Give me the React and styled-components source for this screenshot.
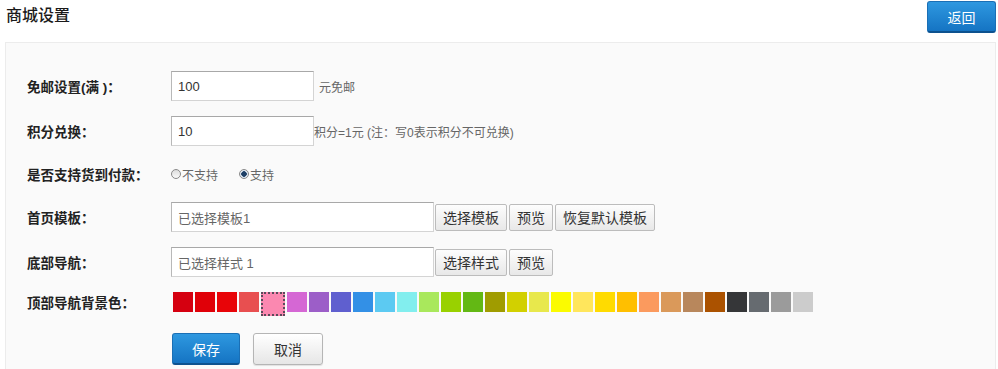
import styled, { createGlobalStyle } from "styled-components";

const GlobalStyle = createGlobalStyle`
  body {
    margin: 0;
    background: #fff;
    font-family: "Liberation Sans", "Noto Sans CJK SC", sans-serif;
    color: #333;
  }
`;

const Page = styled.div`
  padding: 0 2px 0 5px;
`;

const Header = styled.div`
  display: flex;
  justify-content: space-between;
  align-items: flex-start;
  height: 42px;
`;

const Title = styled.h2`
  margin: 6px 0 0 1px;
  font-size: 16px;
  font-weight: 500;
  line-height: 20px;
  color: #1a1a1a;
`;

const BlueButton = styled.button`
  width: ${(p) => p.width}px;
  height: ${(p) => p.height}px;
  margin-top: ${(p) => p.top || 0}px;
  border: 1px solid #1a6fb5;
  border-bottom: 2px solid #0d528f;
  border-radius: 3px;
  background: linear-gradient(#2e98e0, #1574c3);
  color: #fff;
  font-family: inherit;
  font-size: 14px;
  cursor: pointer;
`;

const GrayButton = styled.button`
  width: ${(p) => p.width}px;
  height: 32px;
  border: 1px solid #b5b5b5;
  border-radius: 3px;
  background: linear-gradient(#ffffff, #e6e6e6);
  box-shadow: 0 1px 1px rgba(0, 0, 0, 0.1);
  color: #333;
  font-family: inherit;
  font-size: 14px;
  cursor: pointer;
`;

const Panel = styled.div`
  border: 1px solid #ececec;
  border-bottom: none;
  background: #fafafa;
  padding: 28px 0 4px 21px;
  display: flex;
  flex-direction: column;
  gap: 15px;
`;

const Row = styled.div`
  display: flex;
  align-items: center;
  height: ${(p) => p.h}px;
`;

const Label = styled.label`
  width: 144px;
  flex-shrink: 0;
  font-size: 13.5px;
  font-weight: bold;
  color: #222;
`;

const TextInput = styled.input`
  box-sizing: border-box;
  width: ${(p) => p.width}px;
  height: 30px;
  padding: 0 6px;
  border: 1px solid #d4d4d4;
  border-top-color: #a8a8a8;
  border-left-color: #b8b8b8;
  background: #fff;
  font-family: inherit;
  font-size: 13px;
  color: ${(p) => (p.readOnly ? "#666" : "#333")};
  outline: none;
`;

const Hint = styled.span`
  margin-left: ${(p) => p.gap}px;
  font-size: 12px;
  color: #666;
`;

const SmallButton = styled.button`
  height: 27px;
  margin-left: ${(p) => (p.first ? 1 : 2)}px;
  padding: 0 7px;
  border: 1px solid #bcbcbc;
  border-radius: 2px;
  background: linear-gradient(#fdfdfd, #e8e8e8);
  font-family: inherit;
  font-size: 14px;
  color: #333;
  cursor: pointer;
`;

const RadioGroup = styled.div`
  display: flex;
  gap: 21px;
`;

const RadioOption = styled.span`
  display: flex;
  align-items: center;
  font-size: 12px;
  color: #666;
`;

const RadioDot = styled.span`
  box-sizing: border-box;
  width: 10px;
  height: 10px;
  margin-right: 1px;
  border-radius: 50%;
  border: 1px solid #8a8a8a;
  background: ${(p) =>
    p.checked
      ? "radial-gradient(circle, #1d3f66 0 2.5px, #dfe8f2 3px)"
      : "linear-gradient(#ddd, #fafafa)"};
`;

const Swatches = styled.div`
  display: flex;
  align-items: flex-start;
  gap: 2px;
  height: 20px;
  margin-left: 2px;
`;

const Swatch = styled.span`
  width: 20px;
  height: 20px;
  flex-shrink: 0;
  background: ${(p) => p.color};
  border: ${(p) => (p.selected ? "2px dotted #5a4a5a" : "none")};
`;

const Actions = styled.div`
  display: flex;
  gap: 13px;
  padding-left: 145px;
  margin-top: 6px;
`;

const colors = [
  "#d50010", "#e00008", "#e80408", "#e84f50", "#fb88b0", "#d567d4",
  "#9c5ec8", "#5f5fcf", "#3390e6", "#5ccaf2", "#82eeee", "#a9e85c",
  "#99d100", "#63b814", "#a09c00", "#d2d000", "#e8e84c", "#fbfb00",
  "#ffe65c", "#ffdb00", "#ffbf00", "#fb9a5e", "#da995a", "#b8875c",
  "#ab5200", "#353638", "#666b70", "#9b9b9b", "#cccccc",
];

const App = () => {
  return (
    <>
      <GlobalStyle />
      <Page>
        <Header>
          <Title>商城设置</Title>
          <BlueButton width={69} height={32} top={1}>返回</BlueButton>
        </Header>
        <Panel>
          <Row h={30}>
            <Label>免邮设置(满 )：</Label>
            <TextInput width={143} defaultValue="100" />
            <Hint gap={5}>元免邮</Hint>
          </Row>
          <Row h={30}>
            <Label>积分兑换：</Label>
            <TextInput width={143} defaultValue="10" />
            <Hint gap={0}>积分=1元 (注：写0表示积分不可兑换)</Hint>
          </Row>
          <Row h={26}>
            <Label>是否支持货到付款：</Label>
            <RadioGroup>
              <RadioOption>
                <RadioDot />不支持
              </RadioOption>
              <RadioOption>
                <RadioDot checked />支持
              </RadioOption>
            </RadioGroup>
          </Row>
          <Row h={30}>
            <Label>首页模板：</Label>
            <TextInput width={263} readOnly defaultValue="已选择模板1" />
            <SmallButton first>选择模板</SmallButton>
            <SmallButton>预览</SmallButton>
            <SmallButton>恢复默认模板</SmallButton>
          </Row>
          <Row h={30}>
            <Label>底部导航：</Label>
            <TextInput width={263} readOnly defaultValue="已选择样式 1" />
            <SmallButton first>选择样式</SmallButton>
            <SmallButton>预览</SmallButton>
          </Row>
          <Row h={20}>
            <Label>顶部导航背景色：</Label>
            <Swatches>
              {colors.map((c, i) => (
                <Swatch key={c} color={c} selected={i === 4} />
              ))}
            </Swatches>
          </Row>
          <Actions>
            <BlueButton width={68} height={32}>保存</BlueButton>
            <GrayButton width={70}>取消</GrayButton>
          </Actions>
        </Panel>
      </Page>
    </>
  );
};

export default App;
